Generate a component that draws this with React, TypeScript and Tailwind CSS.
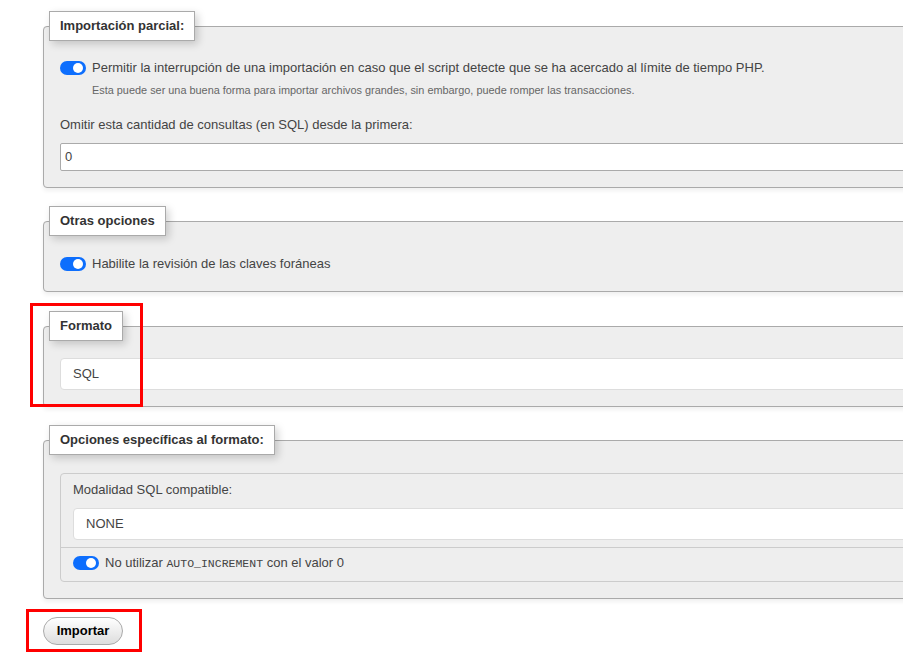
import type React from "react";

const Toggle = () => (
  <span className="relative inline-block h-[14px] w-[26px] shrink-0 rounded-full bg-[#0d6efd]">
    <span className="absolute right-[3px] top-[2px] h-[10px] w-[10px] rounded-full bg-white" />
  </span>
);

const Fieldset = ({
  legend,
  className = "",
  children,
}: {
  legend: string;
  className?: string;
  children: React.ReactNode;
}) => (
  <fieldset
    className={`rounded-[4px] border border-[#aaa] bg-[#eee] pl-[16px] shadow-[0_3px_4px_rgba(0,0,0,0.06)] ${className}`}
  >
    <legend className="ml-[-11px] h-[30px] border border-[#aaa] bg-white px-[10px] text-[13px] leading-[28px] font-bold text-[#333] shadow-[3px_3px_8px_rgba(0,0,0,0.18)]">
      {legend}
    </legend>
    {children}
  </fieldset>
);

export default function App() {
  return (
    <div
      className="relative min-h-[658px] w-full overflow-hidden bg-white text-[13px] text-[#444]"
      style={{ fontFamily: '"Liberation Sans", Arial, sans-serif' }}
    >
      <div className="mr-[-30px] pl-[43px] pt-[11px]">
        <Fieldset legend="Importación parcial:" className="pb-[16px]">
          <div className="mt-[19px] flex h-[16px] items-center gap-[6px]">
            <Toggle />
            <span>
              Permitir la interrupción de una importación en caso que el script detecte que se ha acercado al límite de tiempo PHP.
            </span>
          </div>
          <div className="mt-[7px] pl-[32px] text-[10.9px] leading-[14px] text-[#666]">
            Esta puede ser una buena forma para importar archivos grandes, sin embargo, puede romper las transacciones.
          </div>
          <div className="mt-[20px] leading-[16px]">
            Omitir esta cantidad de consultas (en SQL) desde la primera:
          </div>
          <div className="mt-[10px] flex h-[28px] items-center rounded-[2px] border border-[#aaa] bg-white pl-[4px]">
            0
          </div>
        </Fieldset>

        <Fieldset legend="Otras opciones" className="mt-[18px] pb-[19px]">
          <div className="mt-[20px] flex h-[16px] items-center gap-[6px]">
            <Toggle />
            <span>Habilite la revisión de las claves foráneas</span>
          </div>
        </Fieldset>

        <Fieldset legend="Formato" className="mt-[19px] pb-[16px]">
          <div className="mt-[17px] flex h-[32px] items-center rounded-[4px] border border-[#ddd] bg-white pl-[12px]">
            SQL
          </div>
        </Fieldset>

        <Fieldset legend="Opciones específicas al formato:" className="mt-[18px] pb-[16px]">
          <div className="mt-[18px] rounded-[4px] border border-[#ccc] bg-[#eee]">
            <div className="px-[12px] pb-[7px] pt-[8px]">
              <div className="leading-[16px]">Modalidad SQL compatible:</div>
              <div className="mt-[10px] flex h-[32px] items-center rounded-[4px] border border-[#ddd] bg-white pl-[12px]">
                NONE
              </div>
            </div>
            <div className="border-t border-[#ccc] px-[12px] pb-[10px] pt-[7px]">
              <div className="flex h-[16px] items-center gap-[6px]">
                <Toggle />
                <span>
                  No utilizar{" "}
                  <code
                    className="text-[11.5px]"
                    style={{ fontFamily: '"Liberation Mono", "Courier New", monospace' }}
                  >
                    AUTO_INCREMENT
                  </code>{" "}
                  con el valor 0
                </span>
              </div>
            </div>
          </div>
        </Fieldset>

        <button className="mt-[18px] h-[28px] w-[80px] rounded-full border border-[#aaa] bg-gradient-to-b from-white to-[#ddd] text-[13px] font-bold text-black">
          Importar
        </button>
      </div>

      <div className="pointer-events-none absolute left-[30px] top-[303px] h-[104px] w-[113px] border-[3px] border-[#ff0000]" />
      <div className="pointer-events-none absolute left-[26px] top-[609px] h-[43px] w-[116px] border-[3px] border-[#ff0000]" />
    </div>
  );
}
